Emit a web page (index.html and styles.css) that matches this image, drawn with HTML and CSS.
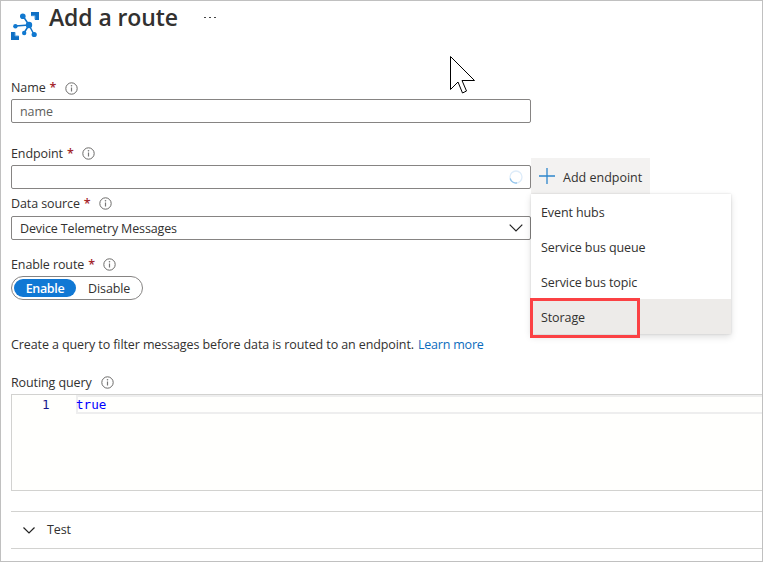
FILE: index.html
```html
<!DOCTYPE html>
<html lang="en">
<head>
<meta charset="utf-8">
<title>Add a route</title>
<link rel="stylesheet" href="styles.css">
</head>
<body>
<svg width="0" height="0" class="defs" aria-hidden="true">
  <symbol id="info" viewBox="0 0 13 13"><circle cx="6.5" cy="6.5" r="5.7" fill="none" stroke="#6b6a69"/><path d="M6.5 5.5v4" stroke="#777" stroke-width="1.2"/><circle cx="6.5" cy="3.8" r=".8" fill="#777"/></symbol>
</svg>
<main class="blade">
  <header class="title-bar">
    <svg class="logo" width="28" height="28" viewBox="0 0 28 28">
      <path d="M20 0h8v8h-4V4h-4zM0 20h4v4h4v4H0z" fill="#1070c4"/>
      <path d="M20.300 3.700h3.700v3.700M4 20.300v3.700h3.700" fill="none" stroke="#4b9ce0" stroke-width="1"/>
      <path d="M18 13 12 4M18 13 4.500 14M18 13l-5 8M18 13l5 9.500" stroke="#1070c4" stroke-width="1.500"/>
      <g fill="#1078d0"><circle cx="18" cy="13" r="3.200"/><circle cx="11.800" cy="4.200" r="2.800"/><circle cx="4.400" cy="14.200" r="2.200"/><circle cx="13.200" cy="21" r="2.200"/><circle cx="23.200" cy="22.500" r="2.600"/></g>
    </svg>
    <h1>Add a route</h1>
    <svg class="more" width="12" height="3" viewBox="0 0 12 3"><path d="M0 1h2v1H0zM5 1h2v1H5zM10 1h2v1h-2z" fill="#444"/></svg>
  </header>

  <section class="field name">
    <label class="label"><span>Name</span><b>*</b><svg class="info"><use href="#info"/></svg></label>
    <div class="box placeholder"><span>name</span></div>
  </section>
  <section class="field endpoint">
    <label class="label"><span>Endpoint</span><b>*</b><svg class="info"><use href="#info"/></svg></label>
    <div class="endpoint-row">
      <div class="box"><svg class="spinner" width="14" height="14" viewBox="0 0 14 14"><circle cx="7" cy="7" r="6" fill="none" stroke="#deecf9" stroke-width="1.300"/><path d="M1.200 8.500A6 6 0 0 0 8 12.900" fill="none" stroke="#8fc2ea" stroke-width="1.300"/></svg></div>
      <div class="add-wrap">
        <button class="add"><svg width="16" height="16" viewBox="0 0 16 16"><path d="M8 0v16M0 8h16" stroke="#2e86cc" stroke-width="1.300"/></svg><span>Add endpoint</span></button>
        <div class="menu">
          <div class="item"><span>Event hubs</span></div>
          <div class="item"><span>Service bus queue</span></div>
          <div class="item"><span>Service bus topic</span></div>
          <div class="item selected"><span>Storage</span></div>
          <div class="highlight"></div>
        </div>
      </div>
    </div>
  </section>
  <section class="field source">
    <label class="label"><span>Data source</span><b>*</b><svg class="info"><use href="#info"/></svg></label>
    <div class="box"><span class="value">Device Telemetry Messages</span><svg class="chevron" width="14" height="8" viewBox="0 0 14 8"><path d="m.7.700 6.300 6.300L13.300.700" fill="none" stroke="#222" stroke-width="1.200"/></svg></div>
  </section>
  <section class="field enable">
    <label class="label"><span>Enable route</span><b>*</b><svg class="info"><use href="#info"/></svg></label>
    <div class="toggle"><span class="on">Enable</span><span class="off">Disable</span></div>
  </section>

  <p class="hint"><span>Create a query to filter messages before data is routed to an endpoint.</span><a>Learn more</a></p>

  <section class="query">
    <label class="label"><span>Routing query</span><svg class="info"><use href="#info"/></svg></label>
    <div class="editor"><span class="line-number">1</span><code>true</code></div>
  </section>

  <section class="test"><svg width="12" height="7" viewBox="0 0 12 7"><path d="m.5.500 5.500 5.500L11.500.500" fill="none" stroke="#222" stroke-width="1.200"/></svg><span>Test</span></section>

  <svg class="cursor" width="27" height="40" viewBox="0 0 27 40"><path d="M2.500 2.500v33l7.500-7.500 4.500 11 4-2-4.500-10.500H26.500z" fill="#fff" stroke="#000"/></svg>
</main>
</body>
</html>
```
FILE: styles.css
```css
* { box-sizing: border-box; }
body { margin: 0; background: #fff; }
.defs { position: absolute; }
.blade {
  position: relative;
  width: 763px;
  height: 562px;
  border: 1px solid #c0c0c0;
  padding-left: 10px;
  overflow: hidden;
  color: #323130;
  font: 12.5px/18px "Open Sans", "Noto Sans", sans-serif;
  letter-spacing: -.1px;
}
svg { display: block; flex: none; }
span { white-space: nowrap; }
.title-bar { display: flex; height: 78px; }
.logo { margin-top: 11px; }
h1 { width: 129px; margin: 1px 26px 0 10px; font-size: 23px; line-height: 30px; font-weight: 600; white-space: nowrap; letter-spacing: -.1px; }
.more { margin-top: 15px; }
.label { display: flex; align-items: center; height: 20px; padding-bottom: 2px; }
.label b { margin: 0 9px 0 4px; color: #a4262c; font-weight: 600; width: 6px; }
.info { width: 13px; height: 13px; }
.box {
  display: flex;
  align-items: center;
  width: 520px;
  height: 24px;
  border: 1px solid #868483;
  border-radius: 2px;
  padding: 0 7px 0 8px;
}
.box span { padding-top: 2px; }
.value { letter-spacing: -.14px; }
.placeholder { color: #605e5c; }
.name { height: 65px; }
.endpoint { height: 50px; }
.endpoint .label { height: 21px; }
.source { height: 61px; padding-top: 1px; }
.source .label { height: 21px; padding-bottom: 4px; }
.enable { height: 81px; }
.enable .label { height: 21px; }
.endpoint-row { display: flex; height: 24px; }
.spinner, .chevron { margin-left: auto; }
.add-wrap { position: relative; height: 36px; margin-top: -7px; }
.add { display: flex; align-items: center; width: 119px; height: 36px; padding: 0 0 0 8px; gap: 8px; border: 0; background: #f3f2f1; color: #323130; font: inherit; letter-spacing: 0; }
.add span { padding-top: 3px; }
.menu { position: absolute; top: 36px; left: 0; width: 200px; background: #fff; box-shadow: 0 3px 7px #0002, 0 0 2px #0002; }
.item { height: 35px; display: flex; align-items: center; padding: 2px 0 0 10px; }
.selected { background: #edebe9; }
.highlight { position: absolute; left: -1px; top: 104px; width: 110px; height: 40px; border: 3px solid #fb4144; }
.toggle { display: flex; align-items: center; width: 132px; height: 24px; padding: 2px; border: 1px solid #868483; border-radius: 12px; }
.on, .off { display: flex; align-items: center; height: 18px; padding-top: 1px; }
.on { flex: none; justify-content: center; width: 62px; border-radius: 9px; background: #1078d4; color: #fff; font-weight: 600; letter-spacing: -.35px; }
.off { padding-left: 12px; }
.hint { display: flex; gap: 4px; height: 35px; margin: 0; }
a { color: #0b6cbd; white-space: nowrap; letter-spacing: -.2px; }
.query { height: 140px; padding-top: 1px; }
.query .info { margin-left: 9px; }
.query .label { height: 22px; padding-bottom: 1px; }
.editor { display: flex; height: 97px; border: 1px solid #d2d2d0; border-right: 0; background: #fffffd; font: 12.6px/20px "DejaVu Sans Mono", monospace; letter-spacing: 0; }
.line-number { width: 64px; padding-left: 30px; color: #16168c; }
code { flex: 1; height: 19px; border: 2px solid #eee; border-right: 0; font: inherit; line-height: 15px; color: #00f; text-indent: -2px; }
.test { display: flex; align-items: center; height: 38px; border: 1px solid #d2d2d0; border-width: 1px 0; padding-left: 12px; gap: 12px; }
.cursor { position: absolute; left: 447px; top: 53px; }
```
